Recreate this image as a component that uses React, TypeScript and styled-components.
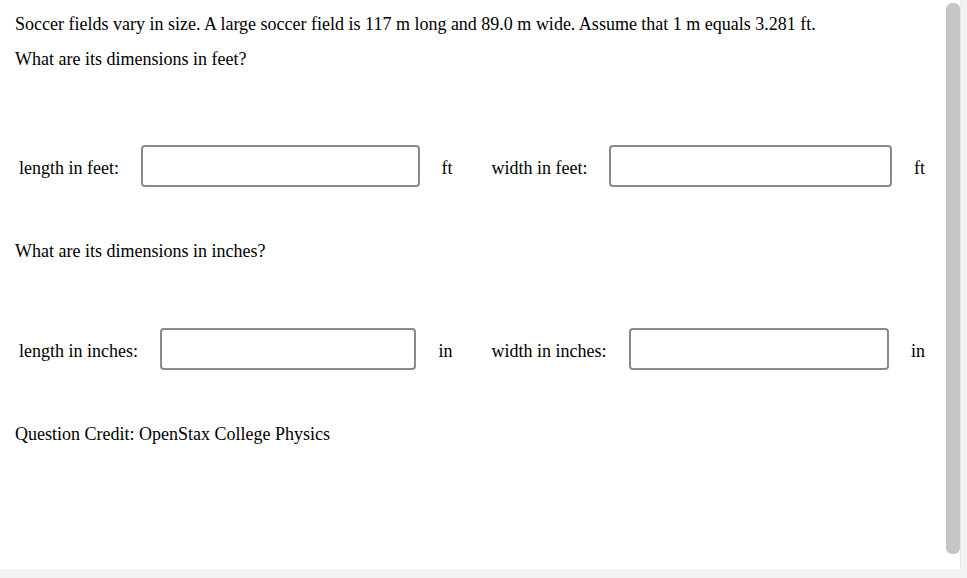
import styled, { createGlobalStyle } from 'styled-components';

const GlobalStyle = createGlobalStyle`
  html, body {
    margin: 0;
    padding: 0;
    background: #f2f2f2;
  }
  body {
    font-family: "Liberation Serif", "Times New Roman", serif;
    font-size: 18px;
    color: #000;
  }
`;

const Frame = styled.div`
  display: flex;
  width: 960px;
  height: 569px;
  background: #fff;
  box-shadow: 0 1px 1px rgba(0, 0, 0, 0.25);
`;

const Content = styled.div`
  flex: 1;
  padding: 14px 20px 0 15px;
`;

const Text = styled.p<{ $top: number }>`
  margin: ${p => p.$top}px 0 0;
  line-height: 20px;
`;

const Row = styled.div<{ $top: number }>`
  display: flex;
  gap: 39px;
  margin: ${p => p.$top}px 0 0 4px;
  height: 42px;
`;

const Half = styled.div`
  flex: 1;
  display: flex;
  align-items: center;
  gap: 22px;
`;

const Label = styled.label`
  white-space: nowrap;
  line-height: 20px;
  padding-top: 4px;
`;

const Field = styled.input`
  flex: 1;
  min-width: 0;
  height: 42px;
  box-sizing: border-box;
  border: 2px solid #8a8a8a;
  border-radius: 4px;
  background: #fff;
  font: inherit;
  padding: 0 8px;
  outline: none;
`;

const Unit = styled.span`
  line-height: 20px;
  padding-top: 4px;
`;

const Track = styled.div`
  width: 15px;
  padding: 3px 0 15px;
  display: flex;
  justify-content: flex-start;
`;

const Thumb = styled.div`
  width: 12px;
  margin-left: 1px;
  flex: 1;
  background: #c6c6c6;
  border-radius: 6px;
`;

type Pair = { label: string; unit: string };

const Answer = ({ label, unit }: Pair) => (
  <Half>
    <Label>{label}</Label>
    <Field type="text" />
    <Unit>{unit}</Unit>
  </Half>
);

export default function App() {
  return (
    <>
      <GlobalStyle />
      <Frame>
        <Content>
          <Text $top={0}>
            Soccer fields vary in size. A large soccer field is 117 m long and 89.0 m wide. Assume that 1 m equals 3.281 ft.
          </Text>
          <Text $top={15}>What are its dimensions in feet?</Text>
          <Row $top={76}>
            <Answer label="length in feet:" unit="ft" />
            <Answer label="width in feet:" unit="ft" />
          </Row>
          <Text $top={54}>What are its dimensions in inches?</Text>
          <Row $top={67}>
            <Answer label="length in inches:" unit="in" />
            <Answer label="width in inches:" unit="in" />
          </Row>
          <Text $top={54}>Question Credit: OpenStax College Physics</Text>
        </Content>
        <Track>
          <Thumb />
        </Track>
      </Frame>
    </>
  );
}
